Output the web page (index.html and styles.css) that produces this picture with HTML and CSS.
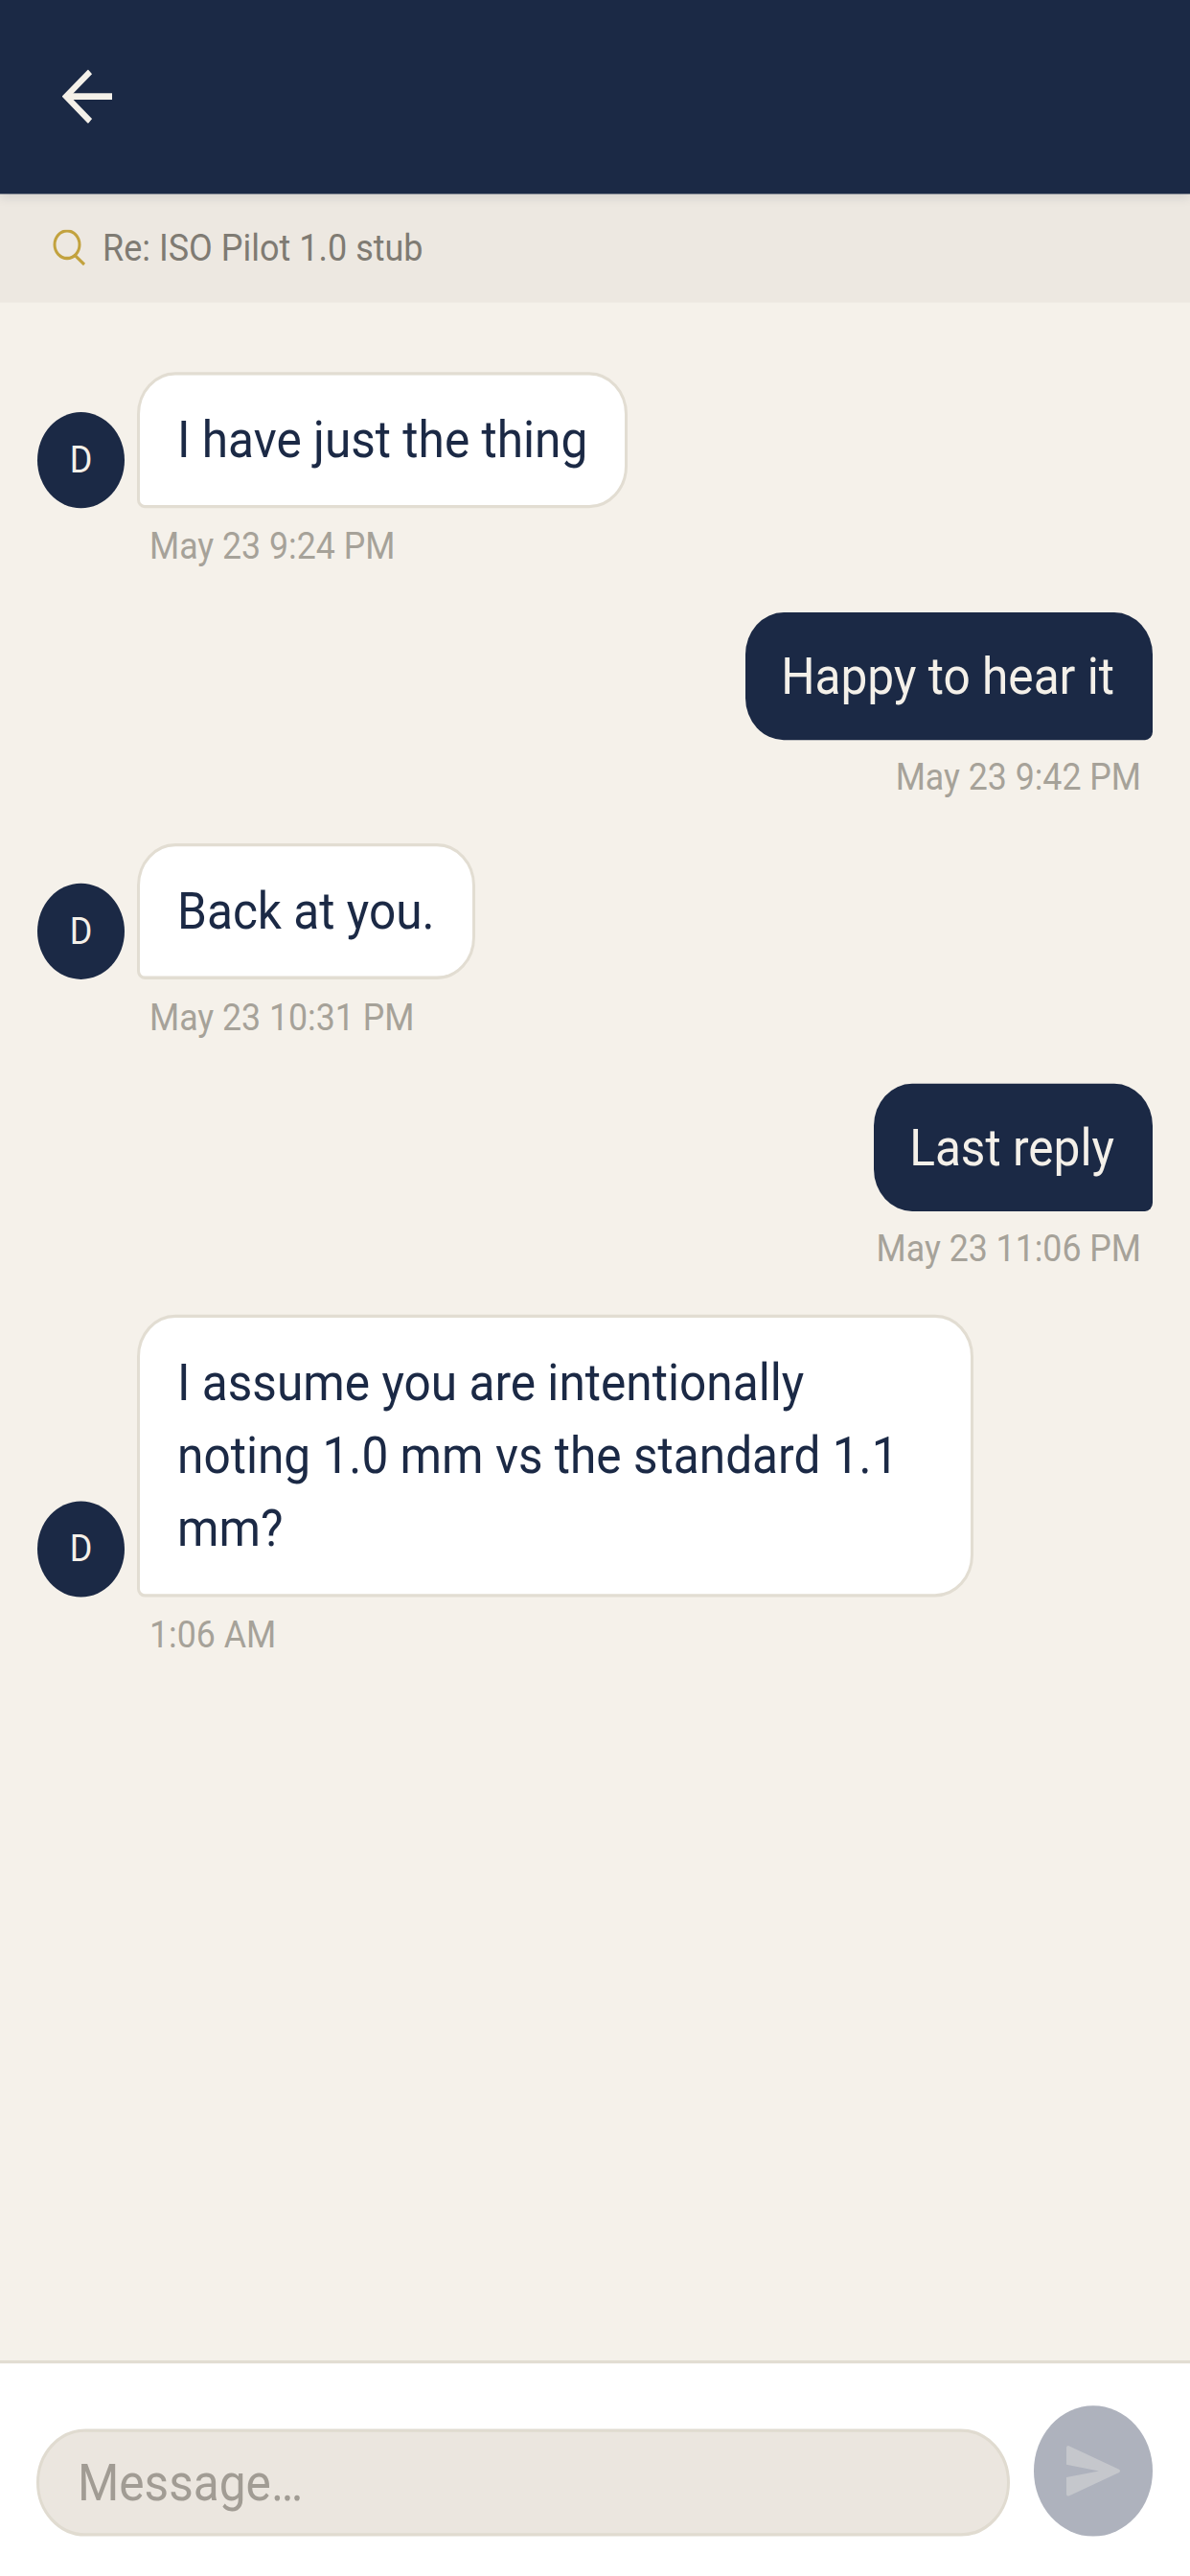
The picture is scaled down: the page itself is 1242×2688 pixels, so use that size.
FILE: index.html
```html
<!DOCTYPE html>
<html lang="en">
<head>
    <meta charset="UTF-8">
    <meta name="viewport" content="width=device-width, initial-scale=1.0">
    <title>Message thread</title>
    <link rel="stylesheet" href="styles.css">
</head>
<body>
    <div class="app">
        <div class="header">
            <svg class="back-icon" viewBox="0 0 52 51" fill="none" stroke="currentColor" stroke-width="6">
                <path d="M52 25.500H4"/>
                <path d="M29 2L4 25.500L29 49"/>
            </svg>
        </div>

        <div class="subject">
            <svg class="search-icon" viewBox="0 0 35 34" fill="none" stroke="currentColor" stroke-width="3">
                <circle cx="15" cy="14" r="13"/>
                <path d="M23 24L33 33"/>
            </svg>
            <span>Re: ISO Pilot 1.0 stub</span>
        </div>

        <div class="thread">
            <div class="group">
                <div class="row">
                    <div class="avatar">D</div>
                    <div class="bubble">I have just the thing</div>
                </div>
                <div class="time">May 23 9:24 PM</div>
            </div>

            <div class="group own">
                <div class="bubble">Happy to hear it</div>
                <div class="time">May 23 9:42 PM</div>
            </div>

            <div class="group">
                <div class="row">
                    <div class="avatar">D</div>
                    <div class="bubble">Back at you.</div>
                </div>
                <div class="time">May 23 10:31 PM</div>
            </div>

            <div class="group own">
                <div class="bubble">Last reply</div>
                <div class="time">May 23 11:06 PM</div>
            </div>

            <div class="group">
                <div class="row">
                    <div class="avatar">D</div>
                    <div class="bubble">I assume you are intentionally noting 1.0 mm vs the standard 1.1 mm?</div>
                </div>
                <div class="time">1:06 AM</div>
            </div>
        </div>

        <div class="composer">
            <input class="message-input" type="text" placeholder="Message…">
            <button class="send-btn" type="button">
                <svg class="send-icon" viewBox="0 0 56 48" fill="currentColor">
                    <path d="M2 0L55 22.500Q57 24 55 25.500L2 48Q0 48 0 46V30L34 24L0 18V2Q0 0 2 0Z"/>
                </svg>
            </button>
        </div>
    </div>
</body>
</html>
```

FILE: styles.css
```css
* {
    margin: 0;
    padding: 0;
    box-sizing: border-box;
}

html, body {
    width: 1242px;
    height: 2688px;
    overflow: hidden;
}

body {
    font-family: 'Roboto', sans-serif;
    background: #f5f1ea;
}

/* the whole screen is 10% taller than wide, circles come out as ovals */
.app {
    width: 1242px;
    height: 2443.6px;
    display: flex;
    flex-direction: column;
    transform: scaleY(1.1);
    transform-origin: top left;
}

.header {
    height: 183.6px;
    flex-shrink: 0;
    background: #1b2945;
    color: #f4f0e9;
    display: flex;
    align-items: center;
    padding-left: 65px;
    position: relative;
    box-shadow: 0 3px 10px rgba(27, 41, 69, 0.12);
}

.back-icon {
    width: 52px;
    height: 51px;
}

.subject {
    height: 103.600px;
    flex-shrink: 0;
    background: #ede8e1;
    color: #7f7b73;
    display: flex;
    align-items: center;
    gap: 17px;
    padding-left: 55px;
    font-size: 36px;
}

.search-icon {
    width: 35px;
    height: 34px;
    color: #c2a23e;
}

.thread {
    flex: 1;
    display: flex;
    flex-direction: column;
    gap: 40.700px;
    padding: 65.500px 39px 0;
}

.group {
    display: flex;
    flex-direction: column;
    align-items: flex-start;
}

.group.own {
    align-items: flex-end;
}

.row {
    display: flex;
    align-items: flex-end;
    gap: 13px;
}

.avatar {
    width: 91px;
    height: 91px;
    flex-shrink: 0;
    border-radius: 50%;
    background: #1b2945;
    color: #f4f0e9;
    display: flex;
    align-items: center;
    justify-content: center;
    font-size: 36px;
}

.bubble {
    max-width: 873px;
    padding: 27px 39px;
    background: white;
    border: 3px solid #e2ddd2;
    border-radius: 40px 40px 40px 8px;
    color: #1b2945;
    font-size: 49.600px;
    line-height: 69.300px;
}

.own .bubble {
    padding: 26px 40px 26px 37px;
    background: #1b2945;
    border: none;
    border-radius: 40px 40px 8px 40px;
    color: #f4f0e9;
}

.time {
    margin: 14px 0 0 117px;
    color: #a6a299;
    font-size: 35.700px;
    line-height: 44px;
}

.own .time {
    margin: 13px 12px 0 0;
}

.composer {
    height: 204.600px;
    flex-shrink: 0;
    background: white;
    border-top: 3px solid #e2ddd2;
    display: flex;
    align-items: flex-end;
    gap: 25px;
    padding: 0 39px 38px 38px;
}

.message-input {
    width: 1016px;
    height: 102px;
    padding: 0 40px;
    background: #ebe6df;
    border: 3px solid #e0dbd0;
    border-radius: 51px;
    font-family: inherit;
    font-size: 49.600px;
    outline: none;
}

.message-input::placeholder {
    color: #a19c94;
    opacity: 1;
}

.send-btn {
    width: 124px;
    height: 124px;
    flex-shrink: 0;
    border: none;
    border-radius: 50%;
    background: #aeb2bd;
    color: #c5c7cc;
    display: flex;
    align-items: center;
    justify-content: center;
}

.send-icon {
    width: 56px;
    height: 48px;
}
```
